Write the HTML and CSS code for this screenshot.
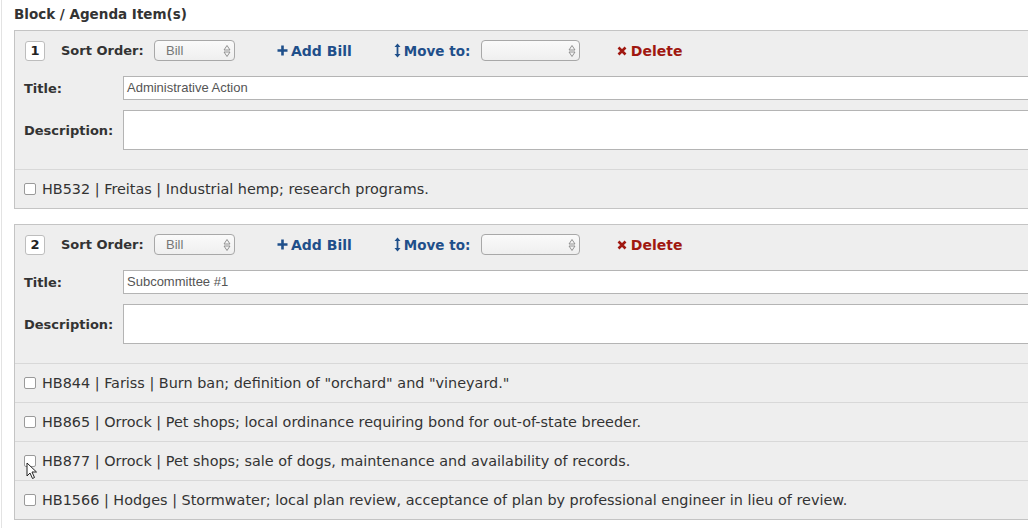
FILE: index.html
```html
<!DOCTYPE html>
<html>
<head>
<meta charset="utf-8">
<link rel="stylesheet" href="styles.css">
</head>
<body>
<div class="page">
  <h2 class="heading">Block / Agenda Item(s)</h2>

  <div class="panel">
    <div class="panel-head">
      <span class="num">1</span>
      <span class="lbl sort-lbl">Sort Order:</span>
      <span class="select sel-sort"><span class="sel-text">Bill</span><span class="sel-arrows"><svg width="8" height="14" viewBox="0 0 8 14"><path d="M1 6 L4 1.5 L7 6 Z M1 8 L4 12.5 L7 8 Z" fill="none" stroke="#888" stroke-width="0.9"/></svg></span></span>
      <a class="act add"><svg class="ic" width="11" height="11" viewBox="0 0 11 11"><path d="M5.5 0.5 V10.5 M0.5 5.5 H10.5" stroke="#1f4f8a" stroke-width="2.6"/></svg>Add Bill</a>
      <a class="act move"><svg class="ic" width="7" height="15" viewBox="0 0 7 15"><path d="M3.5 2 V13" stroke="#1f4f8a" stroke-width="1.8"/><path d="M0.5 4 L3.5 0.5 L6.5 4 Z M0.5 11 L3.5 14.5 L6.5 11 Z" fill="#1f4f8a"/></svg>Move to:</a>
      <span class="select sel-move"><span class="sel-text"></span><span class="sel-arrows"><svg width="8" height="14" viewBox="0 0 8 14"><path d="M1 6 L4 1.5 L7 6 Z M1 8 L4 12.5 L7 8 Z" fill="none" stroke="#888" stroke-width="0.9"/></svg></span></span>
      <a class="act del"><svg class="ic" width="10" height="10" viewBox="0 0 10 10"><path d="M1.5 1.5 L8.5 8.5 M8.5 1.5 L1.5 8.5" stroke="#a01810" stroke-width="2.6"/></svg>Delete</a>
    </div>
    <div class="field">
      <span class="lbl flabel">Title:</span>
      <span class="input input-title">Administrative Action</span>
    </div>
    <div class="field field-desc">
      <span class="lbl flabel">Description:</span>
      <span class="input input-desc"></span>
    </div>
    <ul class="bills">
      <li><span class="cb"></span>HB532 | Freitas | Industrial hemp; research programs.</li>
    </ul>
  </div>

  <div class="panel">
    <div class="panel-head">
      <span class="num">2</span>
      <span class="lbl sort-lbl">Sort Order:</span>
      <span class="select sel-sort"><span class="sel-text">Bill</span><span class="sel-arrows"><svg width="8" height="14" viewBox="0 0 8 14"><path d="M1 6 L4 1.5 L7 6 Z M1 8 L4 12.5 L7 8 Z" fill="none" stroke="#888" stroke-width="0.9"/></svg></span></span>
      <a class="act add"><svg class="ic" width="11" height="11" viewBox="0 0 11 11"><path d="M5.5 0.5 V10.5 M0.5 5.5 H10.5" stroke="#1f4f8a" stroke-width="2.6"/></svg>Add Bill</a>
      <a class="act move"><svg class="ic" width="7" height="15" viewBox="0 0 7 15"><path d="M3.5 2 V13" stroke="#1f4f8a" stroke-width="1.8"/><path d="M0.5 4 L3.5 0.5 L6.5 4 Z M0.5 11 L3.5 14.5 L6.5 11 Z" fill="#1f4f8a"/></svg>Move to:</a>
      <span class="select sel-move"><span class="sel-text"></span><span class="sel-arrows"><svg width="8" height="14" viewBox="0 0 8 14"><path d="M1 6 L4 1.5 L7 6 Z M1 8 L4 12.5 L7 8 Z" fill="none" stroke="#888" stroke-width="0.9"/></svg></span></span>
      <a class="act del"><svg class="ic" width="10" height="10" viewBox="0 0 10 10"><path d="M1.5 1.5 L8.5 8.5 M8.5 1.5 L1.5 8.5" stroke="#a01810" stroke-width="2.6"/></svg>Delete</a>
    </div>
    <div class="field">
      <span class="lbl flabel">Title:</span>
      <span class="input input-title">Subcommittee #1</span>
    </div>
    <div class="field field-desc">
      <span class="lbl flabel">Description:</span>
      <span class="input input-desc"></span>
    </div>
    <ul class="bills">
      <li><span class="cb"></span>HB844 | Fariss | Burn ban; definition of "orchard" and "vineyard."</li>
      <li><span class="cb"></span>HB865 | Orrock | Pet shops; local ordinance requiring bond for out-of-state breeder.</li>
      <li><span class="cb"></span>HB877 | Orrock | Pet shops; sale of dogs, maintenance and availability of records.<svg class="cursor" width="12" height="18" viewBox="0 0 12 18"><path d="M1 1 L1 14 L4 11 L6.5 16.5 L8.5 15.5 L6 10 L10.5 10 Z" fill="#fff" stroke="#222" stroke-width="1"/></svg></li>
      <li><span class="cb"></span>HB1566 | Hodges | Stormwater; local plan review, acceptance of plan by professional engineer in lieu of review.</li>
    </ul>
  </div>
</div>
</body>
</html>
```

FILE: styles.css
```css
html, body {
  margin: 0;
  padding: 0;
  background: #fff;
  overflow: hidden;
}
body {
  font-family: "DejaVu Sans", Verdana, sans-serif;
  color: #333;
  width: 1028px;
  height: 528px;
}
.page {
  margin-left: 1px;
  border-left: 1px solid #e3e3e3;
  padding-left: 12px;
  padding-top: 6px;
  min-height: 528px;
  box-sizing: border-box;
}
.heading {
  margin: 0 0 8px 0;
  font-size: 13.5px;
  font-weight: bold;
  line-height: 16px;
  color: #333;
}
.panel {
  width: 1060px;
  background: #eeeeee;
  border: 1px solid #c4c4c4;
  margin-bottom: 15px;
  box-sizing: border-box;
}
.panel-head {
  display: flex;
  align-items: center;
  height: 21px;
  padding: 9px 0 0 10px;
}
.num {
  width: 18px;
  height: 18px;
  border: 1px solid #bdbdbd;
  border-radius: 3px;
  background: #fff;
  display: flex;
  align-items: center;
  justify-content: center;
  font-weight: bold;
  font-size: 13px;
  color: #222;
}
.lbl {
  font-weight: bold;
  font-size: 13px;
  color: #333;
}
.sort-lbl {
  margin-left: 16px;
  width: 93px;
}
.select {
  height: 19px;
  border: 1px solid #a8a8a8;
  border-radius: 4px;
  background: linear-gradient(#fafafa, #efefef);
  display: flex;
  align-items: center;
  justify-content: space-between;
  box-sizing: content-box;
}
.sel-sort { width: 79px; }
.sel-move { width: 97px; }
.sel-text {
  font-family: "Liberation Sans", Arial, sans-serif;
  font-size: 13px;
  color: #777;
  padding-left: 11px;
}
.sel-arrows {
  display: flex;
  padding-right: 3px;
}
.act {
  display: flex;
  align-items: center;
  font-weight: bold;
  font-size: 14px;
  text-decoration: none;
}
.ic { margin-right: 3px; }
.add { color: #1f4f8a; margin-left: 42px; }
.move { color: #1f4f8a; margin-left: 42px; width: 87px; font-size: 13.5px; }
.move .ic { margin-right: 3px; }
.del { color: #a01810; margin-left: 37px; }
.del .ic { margin-right: 4px; }
.field {
  display: flex;
  align-items: center;
  padding-left: 9px;
  margin-top: 15px;
}
.field-desc { margin-top: 10px; }
.flabel { width: 99px; }
.input {
  flex: 1;
  background: #fff;
  border: 1px solid #b4b4b4;
  height: 22px;
  box-sizing: content-box;
  font-family: "Liberation Sans", Arial, sans-serif;
  font-size: 13px;
  color: #555;
  line-height: 22px;
  padding-left: 3px;
}
.input-desc { height: 38px; }
.bills {
  list-style: none;
  margin: 19px 0 0 0;
  padding: 0;
}
.bills li {
  position: relative;
  display: flex;
  align-items: center;
  height: 38px;
  border-top: 1px solid #d8d8d8;
  padding-left: 9px;
  font-size: 14.4px;
  color: #333;
}
.cb {
  width: 10px;
  height: 10px;
  border: 1px solid #9a9a9a;
  border-radius: 2px;
  background: #fff;
  margin-right: 6px;
}
.cursor {
  position: absolute;
  left: 11px;
  top: 20px;
}
```
